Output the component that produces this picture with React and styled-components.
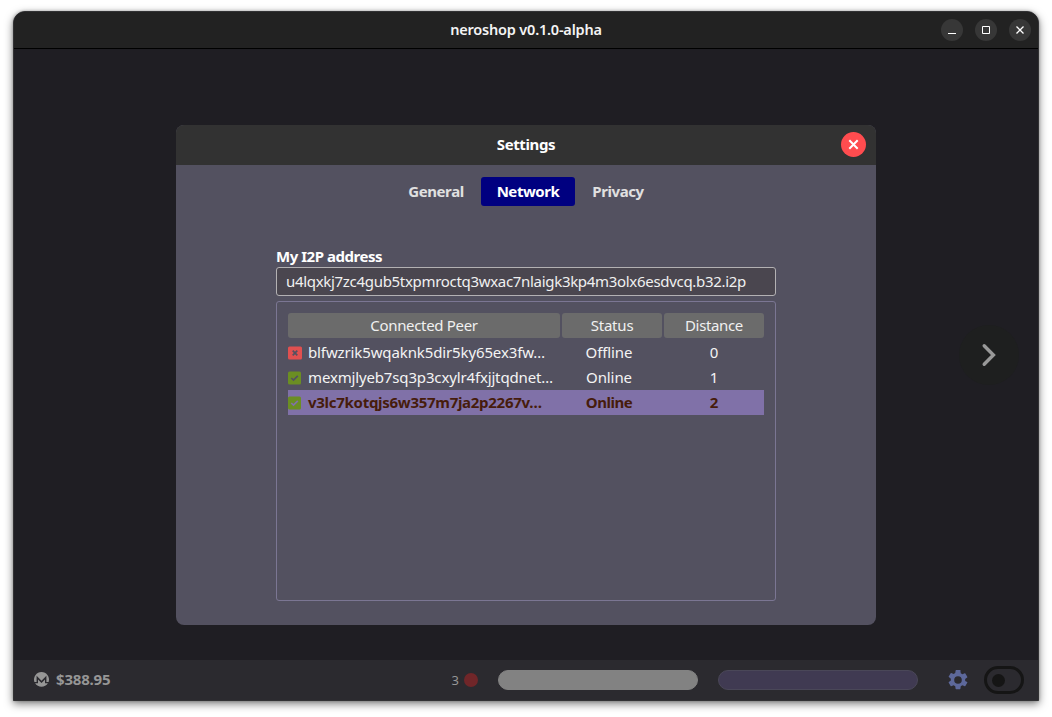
import React from "react";
import styled, { createGlobalStyle } from "styled-components";

const GlobalStyle = createGlobalStyle`
  * { box-sizing: border-box; }
  html, body { margin: 0; background: #ffffff; }
  body { font-family: "Noto Sans", "Open Sans", sans-serif; overflow: hidden; }
  button { font-family: inherit; border: 0; padding: 0; margin: 0; }
`;

const Desktop = styled.div`
  width: 1052px;
  height: 717px;
  padding: 11px 13px 16px;
`;

const Window = styled.div`
  width: 1026px;
  height: 690px;
  display: flex;
  flex-direction: column;
  border: 1px solid #323234;
  border-radius: 12px 12px 0 0;
  background: #1f1e23;
  overflow: hidden;
  box-shadow: 0 3px 9px rgba(0, 0, 0, 0.5), 0 0 3px rgba(0, 0, 0, 0.25);
`;

const TitleBar = styled.header`
  flex: 0 0 37px;
  display: grid;
  grid-template-columns: 1fr auto 1fr;
  align-items: center;
  background: #222222;
  border-bottom: 1px solid #000000;
  padding: 0 7px;
`;

const Label = styled.span`
  display: block;
  white-space: nowrap;
  font-size: ${(p) => p.$size || 15}px;
  font-weight: ${(p) => p.$weight || 400};
  letter-spacing: ${(p) => p.$track || 0}px;
  color: ${(p) => p.$color || "#ffffff"};
  line-height: 18px;
  padding-bottom: 2px;
`;

const WindowControls = styled.div`
  display: flex;
  gap: 12px;
  justify-content: flex-end;
`;

const RoundButton = styled.button`
  width: ${(p) => p.$size}px;
  height: ${(p) => p.$size}px;
  border-radius: 50%;
  background: ${(p) => p.$bg};
  display: flex;
  align-items: center;
  justify-content: center;
  svg { display: block; }
`;

const Content = styled.main`
  flex: 1;
  display: grid;
  grid-template-columns: 1fr 700px 1fr;
  padding-top: 76px;
  align-items: start;
`;

const Dialog = styled.section`
  grid-column: 2;
  height: 500px;
  border-radius: 8px;
  background: #535160;
  overflow: hidden;
`;

const DialogHeader = styled.div`
  height: 40px;
  display: grid;
  grid-template-columns: 1fr auto 1fr;
  align-items: center;
  background: #323232;
  padding: 0 10px 1px;
`;

const CloseSlot = styled.div`
  display: flex;
  justify-content: flex-end;
`;

const Tabs = styled.nav`
  display: flex;
  justify-content: center;
  padding-top: 12px;
`;

const Tab = styled.button`
  width: ${(p) => p.$width}px;
  height: 29px;
  border-radius: 3px;
  display: flex;
  align-items: center;
  justify-content: center;
  background: ${(p) => (p.$active ? "#000080" : "transparent")};
`;

const Panel = styled.div`
  width: 500px;
  margin: 41px auto 0;
`;

const AddressField = styled.div`
  height: 29px;
  display: flex;
  align-items: center;
  padding-left: 9px;
  background: #4a464f;
  border: 1px solid #b3b1b3;
  border-radius: 3px;
  margin-bottom: 5px;
`;

const PeerList = styled.div`
  height: 300px;
  border: 1px solid #7b7693;
  border-radius: 3px;
  padding: 11px;
`;

const HeaderRow = styled.div`
  display: grid;
  grid-template-columns: 272px 100px 100px;
  column-gap: 2px;
  margin-bottom: 2px;
`;

const HeaderCell = styled.div`
  height: 25px;
  display: flex;
  align-items: center;
  justify-content: center;
  background: #6b6b6b;
  border-radius: 3px;
`;

const PeerRow = styled.div`
  height: 25px;
  display: grid;
  grid-template-columns: 266px 110px 100px;
  width: 476px;
  align-items: center;
  justify-items: center;
  background: ${(p) => (p.$selected ? "#8071a8" : "transparent")};
`;

const PeerName = styled.div`
  justify-self: start;
  display: flex;
  align-items: center;
  gap: 6px;
`;

const Arrow = styled.div`
  justify-self: center;
  margin: 200px 0 0 64px;
  width: 60px;
  height: 60px;
  border-radius: 50%;
  background: #1e1f1f;
  display: flex;
  align-items: center;
  justify-content: center;
`;

const Footer = styled.footer`
  flex: 0 0 40px;
  display: flex;
  align-items: center;
  background: #2b2a2f;
  padding: 0 14px 0 20px;
`;

const Price = styled.div`
  flex: 1;
  display: flex;
  align-items: center;
  gap: 7px;
  svg { margin-bottom: 2px; }
`;

const PeerCount = styled.div`
  display: flex;
  align-items: center;
  gap: 5px;
  margin-right: 20px;
`;

const CountLabel = styled(Label)`
  line-height: 20px;
  padding-bottom: 0;
`;

const Dot = styled.i`
  width: 14px;
  height: 14px;
  border-radius: 50%;
  background: #702629;
`;

const Bar = styled.div`
  width: ${(p) => p.$width || 200}px;
  height: 20px;
  border-radius: 10px;
  background: ${(p) => p.$bg};
  border: 1px solid ${(p) => p.$edge};
  margin-right: ${(p) => p.$gap}px;
`;

const Toggle = styled.div`
  width: 40px;
  height: 28px;
  border: 3px solid #151515;
  border-radius: 14px;
  display: flex;
  align-items: center;
  padding-left: 5px;
  margin-left: 16px;
`;

const Knob = styled.i`
  width: 13px;
  height: 13px;
  border-radius: 50%;
  background: #151515;
`;

const StatusIcon = ({ online, selected }) => (
  <svg width="14" height="14" viewBox="0 0 14 14">
    <rect x="0" y="0.5" width={online ? 13 : 14} height="13" rx="1.5" fill={online ? "#6b8e23" : "#e05050"} />
    <path
      d={online ? "M3.3 7 5.5 9.1 9.8 4.9" : "M4.7 4.7 9.3 9.3M9.3 4.7 4.7 9.3"}
      fill="none"
      stroke={selected ? "#8071a8" : "#535160"}
      strokeWidth={1.7}
    />
  </svg>
);

const MoneroIcon = () => (
  <svg width="15" height="15" viewBox="0 0 15 15">
    <path d="M7.5 0A7.5 7.5 0 0 0 .4 9.9H2.6V3.8L7.5 8.7 12.4 3.8V9.9h2.2A7.5 7.5 0 0 0 7.5 0Z" fill="#969696" />
    <path d="M1.1 11.2A7.5 7.5 0 0 0 13.9 11.2H11V7.4L7.5 10.9 4 7.4v3.8Z" fill="#969696" />
  </svg>
);

const GearIcon = () => (
  <svg width="20" height="20" viewBox="2 2 20 20">
    <path
      fill="#5d689b"
      d="M19.14 12.94c.04-.3.06-.61.06-.94s-.02-.64-.07-.94l2.03-1.58a.49.49 0 0 0 .12-.61l-1.92-3.32a.49.49 0 0 0-.59-.22l-2.39.96a7 7 0 0 0-1.62-.94l-.36-2.54A.48.48 0 0 0 13.92 2h-3.84a.48.48 0 0 0-.48.41l-.36 2.54a7.3 7.3 0 0 0-1.62.94l-2.39-.96a.48.48 0 0 0-.59.22L2.72 8.47a.48.48 0 0 0 .12.61l2.03 1.58c-.05.3-.07.62-.07.94s.02.64.07.94l-2.03 1.58a.49.49 0 0 0-.12.61l1.92 3.32c.12.22.37.29.59.22l2.39-.96c.5.38 1.03.7 1.62.94l.36 2.54c.05.24.24.41.48.41h3.84c.24 0 .44-.17.47-.41l.36-2.54a7 7 0 0 0 1.62-.94l2.39.96c.22.08.47 0 .59-.22l1.92-3.32a.48.48 0 0 0-.12-.61ZM12 15.8a3.8 3.8 0 1 1 0-7.6 3.8 3.8 0 0 1 0 7.6Z"
    />
  </svg>
);

const peers = [
  { name: "blfwzrik5wqaknk5dir5ky65ex3fw…", status: "Offline", distance: 0, track: -0.12 },
  { name: "mexmjlyeb7sq3p3cxylr4fxjjtqdnet…", status: "Online", distance: 1, track: -0.15 },
  { name: "v3lc7kotqjs6w357m7ja2p2267v…", status: "Online", distance: 2, track: -0.28, selected: true },
];

export default function App() {
  return (
    <Desktop>
      <GlobalStyle />
      <Window>
        <TitleBar>
          <span />
          <Label $size={14.5} $weight={600} $track={-0.2} $color="#f4f4f4">neroshop v0.1.0-alpha</Label>
          <WindowControls>
            <RoundButton $size={22} $bg="#373737">
              <svg width="10" height="10"><path d="M1 8.5h8" stroke="#fff" /></svg>
            </RoundButton>
            <RoundButton $size={22} $bg="#373737">
              <svg width="8" height="8"><path d="M.5.5h7v7h-7z" stroke="#fff" fill="none" /></svg>
            </RoundButton>
            <RoundButton $size={22} $bg="#373737">
              <svg width="8" height="8"><path d="M.5.5l7 7M7.5.5l-7 7" stroke="#fff" strokeWidth="1.3" /></svg>
            </RoundButton>
          </WindowControls>
        </TitleBar>
        <Content>
          <Dialog>
            <DialogHeader>
              <span />
              <Label $weight={700} $track={-0.4}>Settings</Label>
              <CloseSlot>
                <RoundButton $size={25} $bg="#ff4c4f">
                  <svg width="11" height="11"><path d="M1.3 1.3l8.4 8.4M9.7 1.3l-8.4 8.4" stroke="#fff" strokeWidth="2" /></svg>
                </RoundButton>
              </CloseSlot>
            </DialogHeader>
            <Tabs>
              <Tab $width={90}><Label $weight={700} $track={-0.4} $color="#e0e0e0">General</Label></Tab>
              <Tab $width={94} $active><Label $weight={700} $track={-0.45}>Network</Label></Tab>
              <Tab $width={86}><Label $weight={700} $track={-0.4} $color="#e0e0e0">Privacy</Label></Tab>
            </Tabs>
            <Panel>
              <Label $weight={700} $track={-0.47}>My I2P address</Label>
              <AddressField>
                <Label $track={-0.31} $color="#f0f0f0">u4lqxkj7zc4gub5txpmroctq3wxac7nlaigk3kp4m3olx6esdvcq.b32.i2p</Label>
              </AddressField>
              <PeerList>
                <HeaderRow>
                  <HeaderCell><Label $track={-0.33} $color="#f0f0f0">Connected Peer</Label></HeaderCell>
                  <HeaderCell><Label $track={-0.2} $color="#f0f0f0">Status</Label></HeaderCell>
                  <HeaderCell><Label $track={-0.35} $color="#f0f0f0">Distance</Label></HeaderCell>
                </HeaderRow>
                {peers.map((p) => {
                  const text = { $color: p.selected ? "#461c0c" : "#f4f4f4", $weight: p.selected ? 700 : 400 };
                  return (
                    <PeerRow key={p.name} $selected={p.selected}>
                      <PeerName>
                        <StatusIcon online={p.status === "Online"} selected={p.selected} />
                        <Label {...text} $track={p.track}>{p.name}</Label>
                      </PeerName>
                      <Label {...text} $track={p.selected ? -0.5 : -0.1}>{p.status}</Label>
                      <Label {...text}>{p.distance}</Label>
                    </PeerRow>
                  );
                })}
              </PeerList>
            </Panel>
          </Dialog>
          <Arrow>
            <svg width="16" height="26" viewBox="0 0 16 26">
              <path d="M3.2 3.8 12.4 13 3.2 22.2" fill="none" stroke="#999999" strokeWidth="3.4" strokeLinecap="round" />
            </svg>
          </Arrow>
        </Content>
        <Footer>
          <Price>
            <MoneroIcon />
            <Label $weight={700} $track={-0.2} $color="#969696">$388.95</Label>
          </Price>
          <PeerCount>
            <CountLabel $size={13} $color="#969696">3</CountLabel>
            <Dot />
          </PeerCount>
          <Bar $bg="#828282" $edge="#828282" $gap={20} />
          <Bar $bg="#403a52" $edge="#4a4758" $gap={30} />
          <GearIcon />
          <Toggle><Knob /></Toggle>
        </Footer>
      </Window>
    </Desktop>
  );
}
